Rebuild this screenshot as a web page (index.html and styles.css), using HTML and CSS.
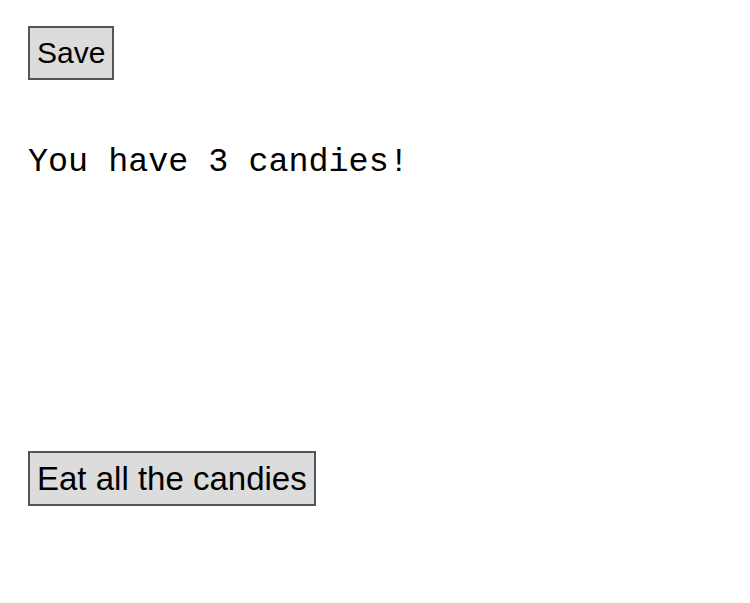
FILE: index.html
```html
<!DOCTYPE html>
<html>
<head>
<meta charset="utf-8">
<link rel="stylesheet" href="styles.css">
</head>
<body>
<div class="page">
  <button class="btn btn-save">Save</button>
  <p class="status">You have 3 candies!</p>
  <button class="btn btn-eat">Eat all the candies</button>
</div>
</body>
</html>
```

FILE: styles.css
```css
html, body {
  margin: 0;
  padding: 0;
  background: #ffffff;
}
.page {
  display: flex;
  flex-direction: column;
  align-items: flex-start;
  padding: 26px 28px;
}
.btn {
  font-family: "Liberation Sans", Arial, sans-serif;
  font-size: 33px;
  color: #000;
  background: #dcdcdc;
  border: 2px solid #50555b;
  border-radius: 0;
  padding: 0 7px;
  margin: 0;
  line-height: 50px;
  height: 55px;
}
.btn-save {
  height: 54px;
  padding: 0 7px;
  font-size: 30px;
}
.status {
  font-family: "Liberation Mono", "Courier New", monospace;
  font-size: 33.4px;
  line-height: 40px;
  margin: 62px 0 0 0;
  color: #000;
}
.btn-eat {
  margin-top: 269px;
}
```
